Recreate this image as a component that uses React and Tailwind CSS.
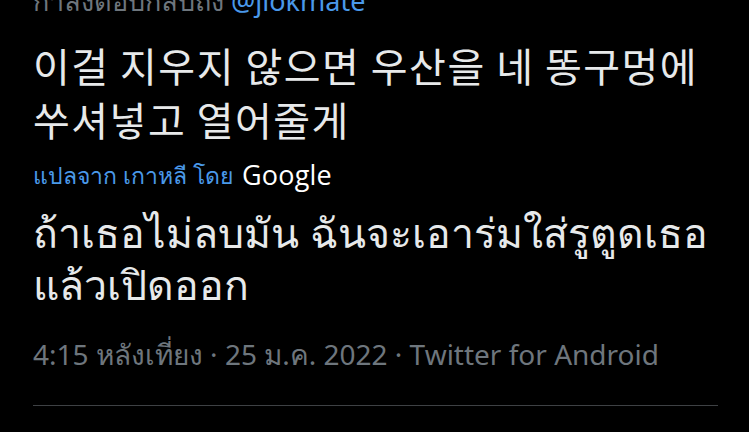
export default function App() {
  return (
    <div className="w-[749px] h-[432px] overflow-hidden bg-black pl-[33px] pr-[31px]" style={{ fontFamily: '"Noto Sans", "Noto Sans CJK KR", sans-serif' }}>
      <div className="-mt-[14px] text-[27px] leading-[30px] text-[#6e767d]">
        กำลังตอบกลับถึง <span className="text-[#4a99e9]">@jiokmate</span>
      </div>
      <p className="mt-[22px] text-[40px] leading-[54px] tracking-[1.5px] break-keep text-[#e7e9ea]" style={{ fontFamily: '"Noto Sans CJK KR", sans-serif' }}>
        이걸 지우지 않으면 우산을 네 똥구멍에 쑤셔넣고 열어줄게
      </p>
      <div className="mt-[12px] flex items-center gap-[9px] h-[34px]">
        <span className="text-[23px] text-[#4a99e9]">แปลจาก เกาหลี โดย</span>
        <span className="text-[27px] font-medium text-white tracking-[0.2px]" style={{ fontFamily: '"Open Sans", sans-serif' }}>Google</span>
      </div>
      <p className="mt-[14px] text-[41px] leading-[52px] text-[#e7e9ea]">
        ถ้าเธอไม่ลบมัน ฉันจะเอาร่มใส่รูตูดเธอแล้วเปิดออก
      </p>
      <div className="mt-[28px] text-[28px] leading-[32px] text-[#6e767d]">
        4:15 หลังเที่ยง · 25 ม.ค. 2022 · Twitter for Android
      </div>
      <div className="mt-[35px] h-px bg-[#3e4144]" />
    </div>
  );
}
